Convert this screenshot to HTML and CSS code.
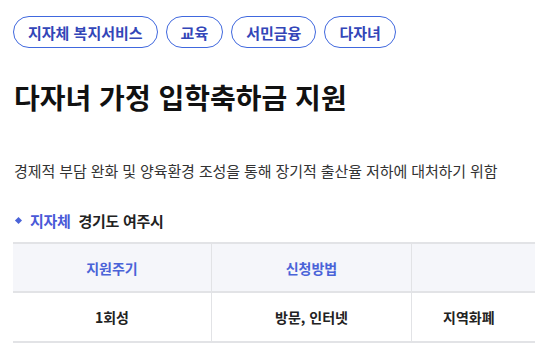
FILE: index.html
```html
<!DOCTYPE html>
<html lang="ko">
<head>
<meta charset="utf-8">
<link rel="stylesheet" href="styles.css">
</head>
<body>
<div class="page">
  <div class="tags">
    <span class="tag">지자체 복지서비스</span>
    <span class="tag">교육</span>
    <span class="tag">서민금융</span>
    <span class="tag">다자녀</span>
  </div>
  <h1 class="title">다자녀 가정 입학축하금 지원</h1>
  <p class="desc">경제적 부담 완화 및 양육환경 조성을 통해 장기적 출산율 저하에 대처하기 위함</p>
  <div class="region">
    <span class="bullet"></span>
    <span class="region-label">지자체</span>
    <span class="region-value">경기도 여주시</span>
  </div>
  <div class="table-wrap">
    <div class="table">
      <div class="cell head">지원주기</div>
      <div class="cell head">신청방법</div>
      <div class="cell head last"></div>
      <div class="cell body">1회성</div>
      <div class="cell body">방문, 인터넷</div>
      <div class="cell body last left">지역화폐</div>
    </div>
  </div>
</div>
</body>
</html>
```

FILE: styles.css
```css
* { box-sizing: border-box; }
html, body { margin: 0; padding: 0; background: #fff; }
body {
  font-family: "Noto Sans CJK KR", "Noto Sans", sans-serif;
  color: #222;
  overflow: hidden;
}
.page {
  padding: 16px 0 0 13px;
  display: flex;
  flex-direction: column;
}
.tags {
  display: flex;
  gap: 8px;
}
.tag {
  display: inline-flex;
  align-items: center;
  height: 32px;
  padding: 0 14px;
  border: 1px solid #4068de;
  border-radius: 16px;
  color: #3346b8;
  font-size: 15px;
  font-weight: 600;
}
.title {
  margin: 29px 0 0 1px;
  font-size: 28px;
  line-height: 40px;
  font-weight: 700;
  color: #111;
}
.desc {
  margin: 43px 0 0 1px;
  font-size: 15px;
  line-height: 22px;
  color: #333;
  letter-spacing: -0.1px;
}
.region {
  margin-top: 27px;
  display: flex;
  align-items: center;
  height: 22px;
  font-size: 15px;
  font-weight: 700;
  letter-spacing: -0.3px;
}
.bullet {
  width: 5px;
  height: 5px;
  background: #4a63d8;
  transform: rotate(45deg);
  margin: 0 9px 0 3px;
}
.region-label { color: #4a5ad8; margin-right: 8px; }
.region-value { color: #222; }
.table-wrap {
  margin-top: 11px;
  width: 522px;
  overflow: hidden;
}
.table {
  width: 600px;
  display: grid;
  grid-template-columns: 199px 200px 201px;
  border-top: 2px solid #e2e3e6;
}
.cell {
  display: flex;
  align-items: center;
  justify-content: center;
  font-size: 14px;
  border-right: 1px solid #e2e3e6;
  border-bottom: 2px solid #e2e3e6;
}
.cell.last { border-right: none; }
.head {
  height: 49px;
  background: #f5f6fa;
  color: #4a63d8;
  font-weight: 600;
}
.body {
  height: 50px;
  color: #222;
  font-weight: 700;
}
.body.left { justify-content: flex-start; padding-left: 31px; }
```
